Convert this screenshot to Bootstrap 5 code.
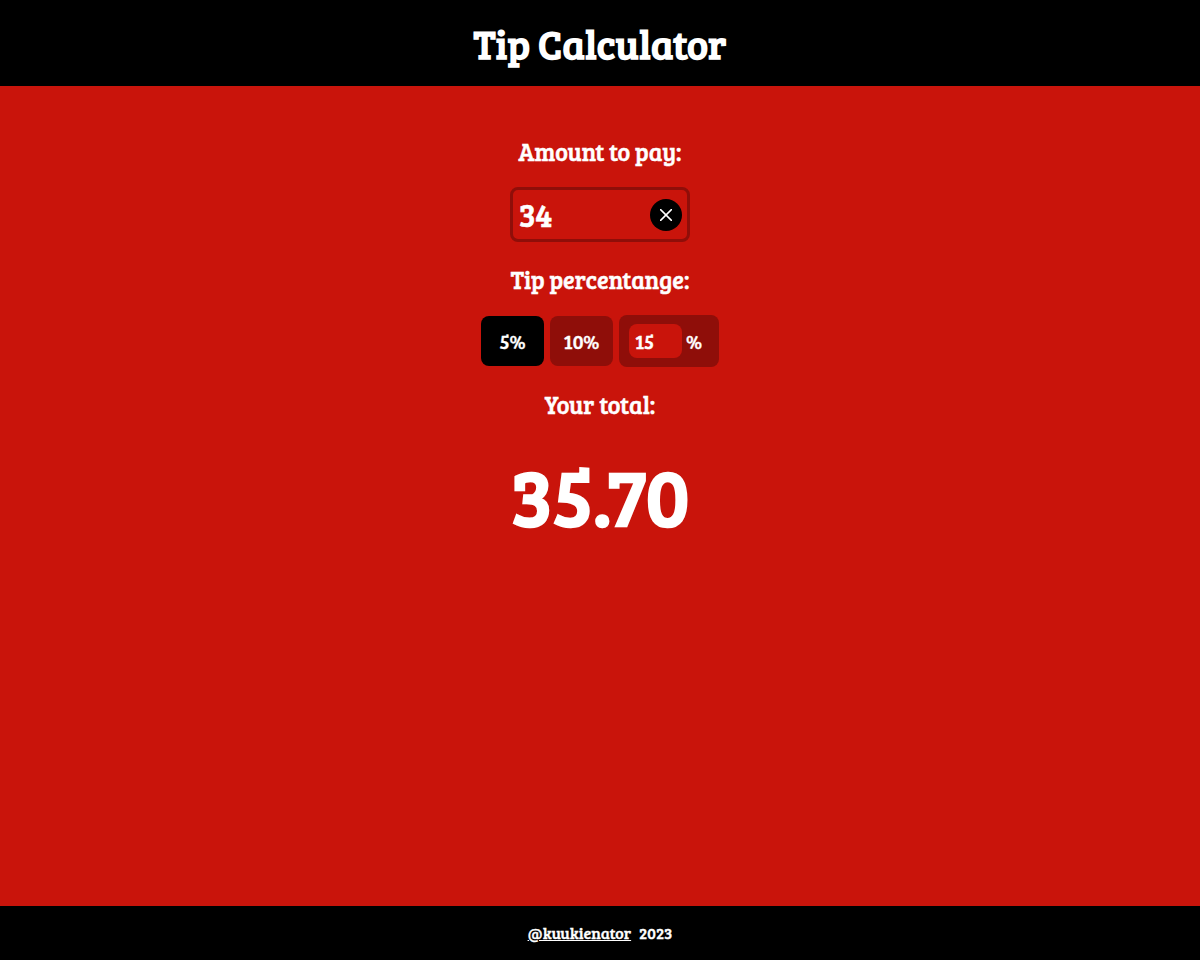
<!DOCTYPE html>
<html lang="en">
<head>
<meta charset="utf-8">
<meta name="viewport" content="width=device-width, initial-scale=1">
<title>Tip Calculator</title>
<link href="https://cdn.jsdelivr.net/npm/bootstrap@5.3.0/dist/css/bootstrap.min.css" rel="stylesheet">
<style>
  :root { --tip-red: #c9140b; --tip-dark: #8f0e09; }
  body {
    background: var(--tip-red);
    font-family: "Bree Serif", "Liberation Serif", serif;
    font-weight: 400;
    -webkit-text-stroke: .02em currentColor;
  }
  .page-title, .total { font-weight: 700; -webkit-text-stroke: 0; }
  .page-title { font-size: 40px; line-height: 48px; padding: 19px 0; }
  .calc { padding-top: 48px; }
  .field-title { font-size: 24px; line-height: 36px; font-weight: 400; margin-bottom: 17px; -webkit-text-stroke: .02em currentColor; }
  .field-group { margin-bottom: 20px; }
  .amount-box { width: 180px; height: 55px; border: 3px solid var(--tip-dark); border-radius: 8px; padding: 0 5px 0 6px; }
  .bare-input { border: 0; color: #fff; min-width: 0; outline-offset: 2px; -webkit-text-stroke: .02em currentColor; }
  .amount-input { background: transparent; font-size: 32px; line-height: 40px; padding: 0; }
  .clear-btn { width: 32px; height: 32px; }
  .tip-btn { width: 63px; height: 50px; border-radius: 8px; background: var(--tip-dark); font-size: 20px; }
  .tip-btn.active { background: #000; }
  .tip-custom { width: 100px; height: 52px; border-radius: 8px; background: var(--tip-dark); font-size: 20px; padding-left: 10px; gap: 4px; }
  .custom-input { width: 53px; height: 34px; border-radius: 8px; background: var(--tip-red); padding: 0 6px; }
  .tip-row { gap: 6px; }
  .total { font-size: 80px; line-height: 80px; padding-top: 14px; }
  .page-footer { height: 54px; font-size: 16px; }
</style>
</head>
<body class="d-flex flex-column min-vh-100 text-white">
  <header class="bg-black text-center">
    <h1 class="page-title m-0">Tip Calculator</h1>
  </header>

  <main class="calc flex-grow-1 d-flex flex-column align-items-center">
    <div class="field-group d-flex flex-column align-items-center">
      <label class="field-title" for="amount">Amount to pay:</label>
      <div class="amount-box d-flex align-items-center">
        <input class="bare-input amount-input flex-fill" id="amount" type="text" inputmode="decimal" value="34">
        <button class="clear-btn btn p-0 border-0 rounded-circle bg-black d-flex align-items-center justify-content-center flex-shrink-0" type="button" aria-label="Clear amount">
          <svg width="12" height="12" viewBox="0 0 12 12" fill="none" stroke="#fff" stroke-width="1.5" stroke-linecap="round" aria-hidden="true"><path d="M.6.6 11.4 11.4M11.4.6.6 11.4"/></svg>
        </button>
      </div>
    </div>

    <div class="field-group d-flex flex-column align-items-center">
      <label class="field-title" for="custom-tip">Tip percentange:</label>
      <div class="tip-row d-flex align-items-center">
        <button class="tip-btn btn active border-0 p-0 text-white" type="button">5%</button>
        <button class="tip-btn btn border-0 p-0 text-white" type="button">10%</button>
        <div class="tip-custom d-flex align-items-center">
          <input class="bare-input custom-input" id="custom-tip" type="text" inputmode="numeric" value="15">
          <span>%</span>
        </div>
      </div>
    </div>

    <h2 class="field-title">Your total:</h2>
    <output class="total" for="amount custom-tip">35.70</output>
  </main>

  <footer class="page-footer bg-black d-flex align-items-center justify-content-center gap-2">
    <a class="text-white" href="#">@kuukienator</a>
    <span>2023</span>
  </footer>
<script src="https://cdn.jsdelivr.net/npm/bootstrap@5.3.0/dist/js/bootstrap.bundle.min.js"></script>
</body>
</html>
